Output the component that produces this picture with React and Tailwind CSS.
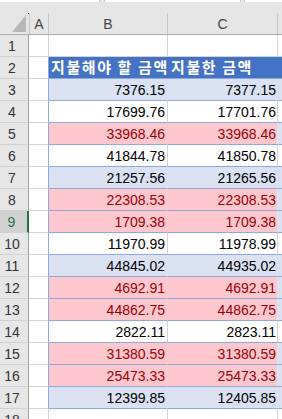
import React from "react";

const rows = [
  [3, "7376.15", "7377.15", "band"],
  [4, "17699.76", "17701.76", "white"],
  [5, "33968.46", "33968.46", "pink"],
  [6, "41844.78", "41850.78", "white"],
  [7, "21257.56", "21265.56", "band"],
  [8, "22308.53", "22308.53", "pink"],
  [9, "1709.38", "1709.38", "pink"],
  [10, "11970.99", "11978.99", "white"],
  [11, "44845.02", "44935.02", "band"],
  [12, "4692.91", "4692.91", "pink"],
  [13, "44862.75", "44862.75", "pink"],
  [14, "2822.11", "2823.11", "white"],
  [15, "31380.59", "31380.59", "pink"],
  [16, "25473.33", "25473.33", "pink"],
  [17, "12399.85", "12405.85", "band"],
];

function RowHead({ n, sel }) {
  return (
    <div
      className={
        "w-[29px] h-full flex items-center justify-center pr-[4px] border-b border-b-[#d0d0d0] " +
        (sel
          ? "bg-[#d2d2d2] text-[#217346] border-r-2 border-r-[#217346]"
          : "bg-[#e6e6e6] text-[#333] border-r border-r-[#9f9f9f]")
      }
    >
      {n}
    </div>
  );
}

export default function App() {
  return (
    <div
      className="w-[282px] h-[419px] overflow-hidden bg-white text-[14px] leading-none"
      style={{ fontFamily: '"Liberation Sans", Arial, sans-serif' }}
    >
      {/* top strip */}
      <div className="h-[3px] flex bg-[#e6e6e6]">
        <div className="w-[100px] h-[2px] bg-white border-r border-[#c8c8c8]" />
        <div className="w-[4px]" />
        <div className="w-[137px] h-[2px] bg-white border-x border-[#c8c8c8]" />
        <div className="w-[3px]" />
        <div className="flex-1 h-[2px] bg-white border-l border-[#c8c8c8]" />
      </div>
      <div className="h-[1px] bg-[#e6e6e6]" />
      {/* column header */}
      <div className="h-[31px] bg-[#e6e6e6] flex border-b border-[#ababab]">
        <div className="w-[29px] h-full relative">
          <svg className="absolute left-0 top-0" width="29" height="31">
            <polygon points="26,11 26,28 12,28" fill="#b8b8b8" />
            <rect x="28" y="9" width="1" height="1" fill="#333" />
          </svg>
        </div>
        <div className="w-[20px] flex flex-col">
          <div className="h-[9px]" />
          <div className="flex-1 flex items-center justify-center border-l border-r border-[#c6c6c6] text-[#444]">A</div>
        </div>
        <div className="w-[119px] flex flex-col">
          <div className="h-[9px]" />
          <div className="flex-1 flex items-center justify-center border-r border-[#c6c6c6] text-[#444]">B</div>
        </div>
        <div className="w-[110px] flex flex-col">
          <div className="h-[9px]" />
          <div className="flex-1 flex items-center justify-center border-r border-[#c6c6c6] text-[#444]">C</div>
        </div>
        <div className="flex-1" />
      </div>

      {/* row 1 */}
      <div className="h-[22px] flex">
        <RowHead n={1} />
        <div className="w-[20px] border-r border-b border-[#d4d4d4]" />
        <div className="w-[119px] border-r border-b border-[#d4d4d4]" />
        <div className="w-[110px] border-r border-b border-[#d4d4d4]" />
        <div className="flex-1 border-b border-[#d4d4d4]" />
      </div>

      {/* row 2 header */}
      <div className="h-[22px] flex">
        <RowHead n={2} />
        <div className="w-[20px] border-r border-b border-r-[#8ea9db] border-b-[#d4d4d4]" />
        <div
          className="w-[230px] bg-[#4472c4] border-b border-[#8ea9db] flex items-center text-white font-bold text-[15px] tracking-[1.6px] whitespace-nowrap"
          style={{ fontFamily: '"Noto Sans CJK KR", sans-serif' }}
        >
          <div className="w-[119px] min-w-0 shrink-0 pl-[2px] pb-[3px]">지불해야 할 금액</div>
          <div className="pl-[3px] pb-[3px]">지불한 금액</div>
        </div>
        <div className="flex-1 bg-[#4472c4] border-b border-[#8ea9db]" />
      </div>

      {rows.map(([n, b, c, kind]) => {
        const bg =
          kind === "pink" ? "bg-[#ffc7ce] text-[#9c0006]" : kind === "band" ? "bg-[#d9e1f2] text-black" : "bg-white text-black";
        const sep =
          kind === "pink" ? "border-r-[#ffc7ce]" : kind === "band" ? "border-r-[#d9e1f2]" : "border-r-[#d4d4d4]";
        const dbg = kind === "white" ? "bg-white" : "bg-[#d9e1f2]";
        return (
          <div key={n} className="h-[22px] flex">
            <RowHead n={n} sel={n === 9} />
            <div className="w-[20px] border-r border-b border-r-[#8ea9db] border-b-[#d4d4d4]" />
            <div className={"w-[119px] border-r border-b border-b-[#8ea9db] flex items-center justify-end pr-[2px] " + bg + " " + sep}>
              {b}
            </div>
            <div
              className={
                "w-[110px] border-r border-b border-b-[#8ea9db] flex items-center justify-end pr-[1px] " +
                bg +
                " " +
                (kind === "white" ? "border-r-[#d4d4d4]" : "border-r-[#d9e1f2]")
              }
            >
              {c}
            </div>
            <div className={"flex-1 border-b border-[#8ea9db] " + dbg} />
          </div>
        );
      })}

      {/* row 18 */}
      <div className="h-[22px] flex">
        <RowHead n={18} />
        <div className="w-[20px] border-r border-b border-[#d4d4d4]" />
        <div className="w-[119px] border-r border-b border-[#d4d4d4]" />
        <div className="w-[110px] border-r border-b border-[#d4d4d4]" />
        <div className="flex-1 border-b border-[#d4d4d4]" />
      </div>
    </div>
  );
}
